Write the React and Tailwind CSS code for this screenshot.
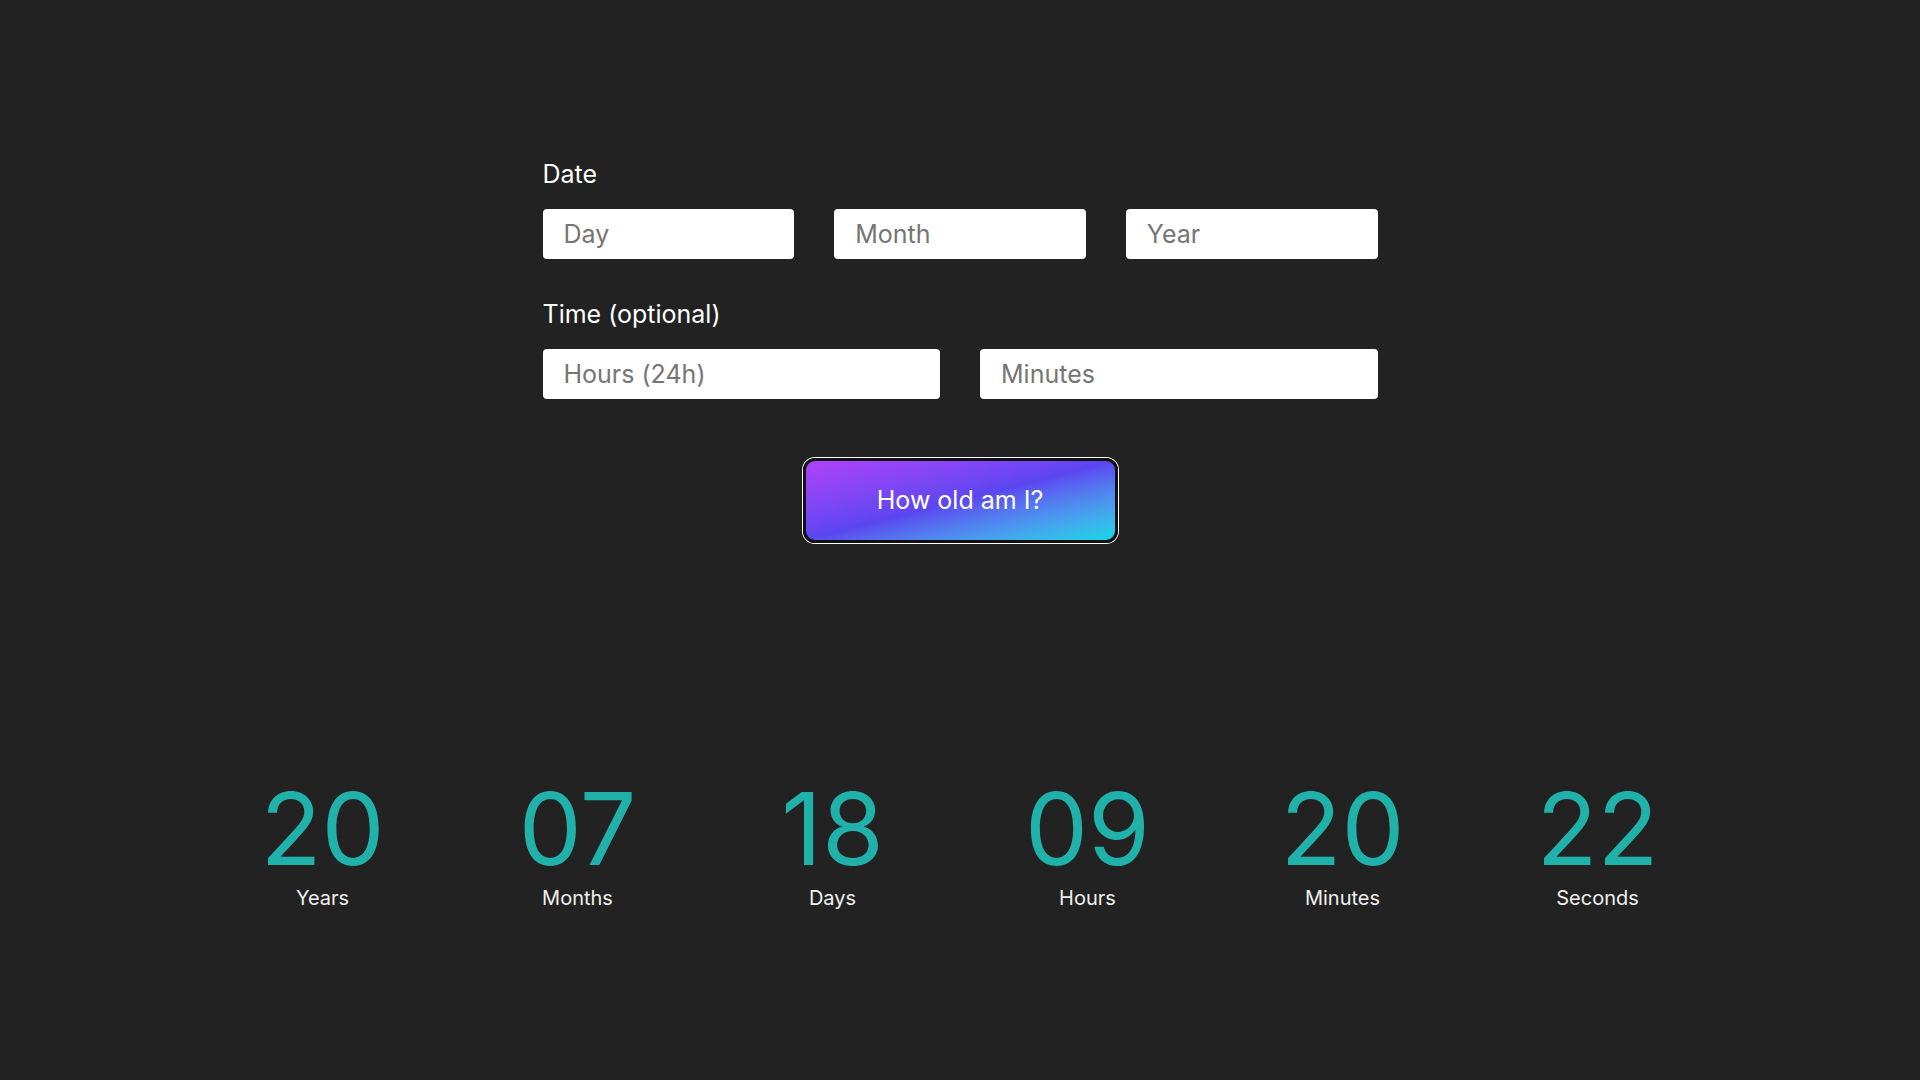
import React from 'react';

const units = [
  { value: '20', label: 'Years' },
  { value: '07', label: 'Months' },
  { value: '18', label: 'Days' },
  { value: '09', label: 'Hours' },
  { value: '20', label: 'Minutes' },
  { value: '22', label: 'Seconds' },
];

const Field = ({ placeholder }) => (
  <input
    type="text"
    placeholder={placeholder}
    className="h-[50px] w-full rounded-[4px] bg-white px-[21px] text-[25px] text-gray-900 outline-none placeholder:text-[#757575]"
  />
);

const App = () => {
  return (
    <div className="min-h-screen bg-[#222222] font-['Inter','Liberation_Sans',sans-serif] text-white">
      <div className="mx-auto w-[835px] pt-[160px]">
        {/* Date */}
        <label className="block text-[25px] leading-[29px] text-white">Date</label>
        <div className="mt-5 grid grid-cols-3 gap-10">
          <Field placeholder="Day" />
          <Field placeholder="Month" />
          <Field placeholder="Year" />
        </div>

        {/* Time */}
        <label className="mt-[41px] block text-[25px] leading-[29px] text-white">Time (optional)</label>
        <div className="mt-5 grid grid-cols-2 gap-10">
          <Field placeholder="Hours (24h)" />
          <Field placeholder="Minutes" />
        </div>

        <div className="mt-[59px] flex justify-center">
          <button className="h-[85px] w-[315px] rounded-[12px] border-[3px] border-[#111] bg-gradient-to-br from-[#b040fa] via-[#5b46f0] to-[#00d8e6] text-[25px] text-white ring-1 ring-white">
            How old am I?
          </button>
        </div>
      </div>

      {/* Result */}
      <div className="mx-auto mt-[240px] grid w-[1530px] grid-cols-6">
        {units.map((u) => (
          <div key={u.label} className="flex flex-col items-center">
            <span className="text-[100px] leading-[92px] text-[#20b2aa]">{u.value}</span>
            <span className="mt-[13px] text-xl leading-none text-[#f0f0f0]">{u.label}</span>
          </div>
        ))}
      </div>
    </div>
  );
};

export default App;
